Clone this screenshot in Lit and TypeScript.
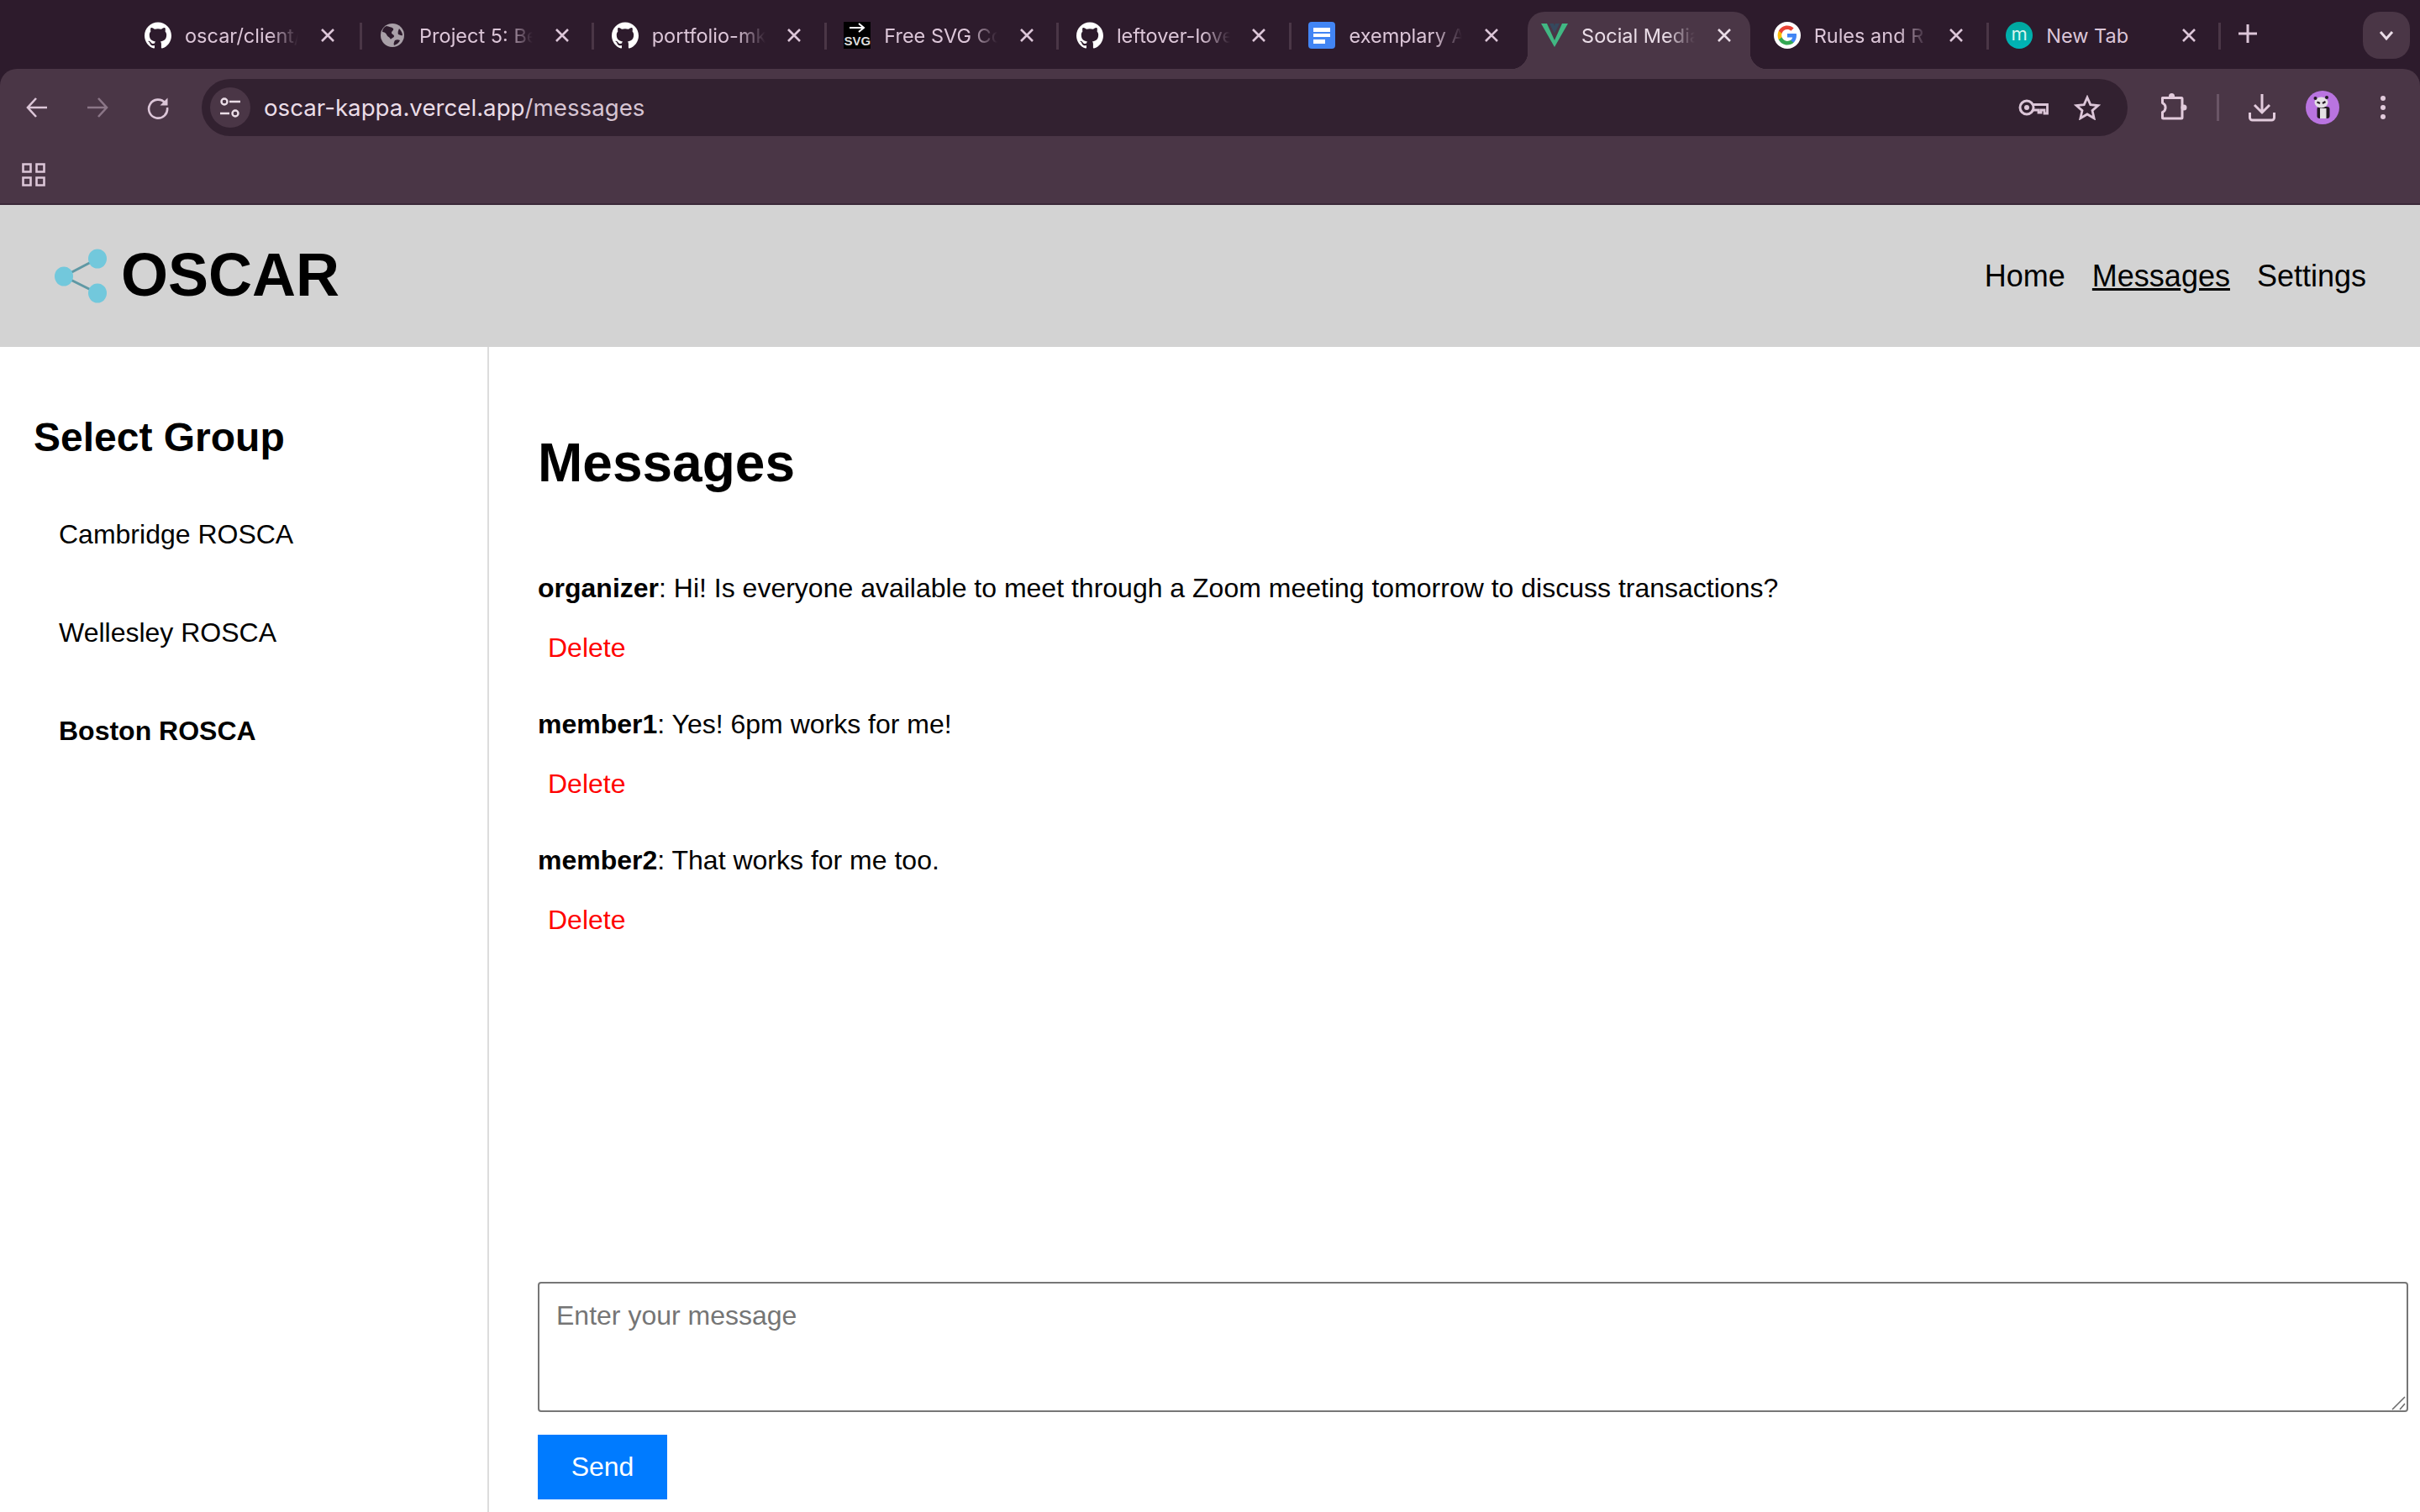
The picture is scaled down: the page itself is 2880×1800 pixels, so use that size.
import { LitElement, html, css, svg } from "lit";
import { customElement, state } from "lit/decorators.js";

const GITHUB = svg`<svg width="32" height="32" viewBox="0 0 24 24"><path fill="#fff" d="M12 .297c-6.63 0-12 5.373-12 12 0 5.303 3.438 9.8 8.205 11.385.6.113.82-.258.82-.577 0-.285-.01-1.04-.015-2.04-3.338.724-4.042-1.61-4.042-1.61C4.422 18.07 3.633 17.7 3.633 17.7c-1.087-.744.084-.729.084-.729 1.205.084 1.838 1.236 1.838 1.236 1.07 1.835 2.809 1.305 3.495.998.108-.776.417-1.305.76-1.605-2.665-.3-5.466-1.332-5.466-5.93 0-1.31.465-2.38 1.235-3.22-.135-.303-.54-1.523.105-3.176 0 0 1.005-.322 3.3 1.23.96-.267 1.98-.399 3-.405 1.02.006 2.04.138 3 .405 2.28-1.552 3.285-1.23 3.285-1.23.645 1.653.24 2.873.12 3.176.765.84 1.23 1.91 1.23 3.22 0 4.61-2.805 5.625-5.475 5.92.42.36.81 1.096.81 2.22 0 1.606-.015 2.896-.015 3.286 0 .315.21.69.825.57C20.565 22.092 24 17.592 24 12.297c0-6.627-5.373-12-12-12"/></svg>`;

const GLOBE = svg`<svg width="32" height="32" viewBox="0 0 32 32"><circle cx="16" cy="16" r="14" fill="#a9a0a8"/><path fill="#2d1b2c" d="M9 5c3 1 6 1 8 3 1 2-2 3-2 5s3 2 3 4-3 2-4 4c-1-3-4-3-5-6-1-2-3-3-5-3 0-3 2-6 5-7zM24 8c2 2 4 5 4 8-2 1-3-1-5-1-1-2 0-5 1-7zM19 22c2-1 4-1 6 0-1 3-4 5-7 6-1-2 0-4 1-6z"/></svg>`;

const SVG_ICON = html`<span class="svg-fav"
  ><svg width="26" height="12" viewBox="0 0 26 12">
    <path d="M4 6h17M15 1l6 5-6 5" fill="none" stroke="#fff" stroke-width="2" /></svg
  ><span class="svg-word">SVG</span></span
>`;

const DOCS = svg`<svg width="32" height="32" viewBox="0 0 32 32"><rect width="32" height="32" rx="4" fill="#4285f4"/><path fill="#fff" d="M6 7h20v5H6zM6 14h20v4H6zM6 21h14v5H6z"/></svg>`;

const VUE = svg`<svg width="32" height="32" viewBox="0 0 32 32"><path fill="#41b883" d="M0 2h7l9 20 9-20h7L16 30z"/><path fill="#35495e" d="M10 2h5l1 3 1-3h5l-6 12z"/></svg>`;

const GOOGLE = svg`<svg width="32" height="32" viewBox="0 0 32 32"><circle cx="16" cy="16" r="16" fill="#fff"/><path fill="#4285f4" d="M27 16.3c0-.8-.1-1.6-.2-2.3H16v4.400h6.200c-.3 1.400-1.100 2.600-2.300 3.400v2.900h3.700c2.100-2 3.400-4.900 3.400-8.400z"/><path fill="#34a853" d="M16 27.500c3.100 0 5.700-1 7.600-2.800l-3.700-2.900c-1 .7-2.400 1.100-3.900 1.100-3 0-5.500-2-6.400-4.700H5.800v3c1.900 3.800 5.800 6.300 10.200 6.300z"/><path fill="#fbbc05" d="M9.600 18.200c-.5-1.400-.5-3 0-4.400v-3H5.800c-1.600 3.200-1.600 7.200 0 10.400z"/><path fill="#ea4335" d="M16 9.100c1.700 0 3.200.6 4.400 1.700l3.300-3.300C21.700 5.600 19 4.500 16 4.500c-4.400 0-8.300 2.500-10.200 6.300l3.800 3c.9-2.700 3.400-4.700 6.400-4.700z"/></svg>`;

const MONICA = html`<span class="m-fav">m</span>`;

const CLOSE = svg`<svg class="close" width="18" height="18" viewBox="0 0 18 18"><path d="M2 2l14 14M16 2L2 16" fill="none" stroke="currentColor" stroke-width="2.600"/></svg>`;

interface Tab {
  title: string;
  icon: unknown;
  active?: boolean;
  noSep?: boolean;
}

const TABS: Tab[] = [
  { title: "oscar/client/", icon: GITHUB },
  { title: "Project 5: Be", icon: GLOBE },
  { title: "portfolio-mk", icon: GITHUB },
  { title: "Free SVG Co", icon: SVG_ICON },
  { title: "leftover-love", icon: GITHUB },
  { title: "exemplary A", icon: DOCS, noSep: true },
  { title: "Social Media", icon: VUE, active: true, noSep: true },
  { title: "Rules and R", icon: GOOGLE },
  { title: "New Tab", icon: MONICA },
];

const MESSAGES = [
  {
    sender: "organizer",
    text: "Hi! Is everyone available to meet through a Zoom meeting tomorrow to discuss transactions?",
  },
  { sender: "member1", text: "Yes! 6pm works for me!" },
  { sender: "member2", text: "That works for me too." },
];

const GROUPS = ["Cambridge ROSCA", "Wellesley ROSCA", "Boston ROSCA"];

@customElement("browser-chrome")
export class BrowserChrome extends LitElement {
  static styles = css`
    :host {
      display: block;
      height: 244px;
      background: #2d1b2c;
      font-family: Inter, "Liberation Sans", sans-serif;
      color: #dcc6d8;
    }
    .strip {
      display: flex;
      height: 82px;
      padding-left: 156px;
      box-sizing: border-box;
    }
    .tab {
      position: relative;
      display: flex;
      align-items: center;
      width: 264.600px;
      height: 68px;
      margin-top: 14px;
      padding: 0 22px 12px 16px;
      box-sizing: border-box;
      border-radius: 20px 20px 0 0;
      font-size: 23.500px;
    }
    .tab:first-child {
      margin-right: 2.500px;
    }
    .tab.active {
      background: #4a3646;
      color: #eadde7;
    }
    .tab.active::before,
    .tab.active::after {
      content: "";
      position: absolute;
      bottom: 0;
      width: 20px;
      height: 20px;
    }
    .tab.active::before {
      left: -20px;
      background: radial-gradient(circle at 0 0, transparent 20px, #4a3646 20.5px);
    }
    .tab.active::after {
      right: -20px;
      background: radial-gradient(circle at 100% 0, transparent 20px, #4a3646 20.5px);
    }
    .fav {
      display: flex;
      flex: none;
      width: 32px;
      height: 32px;
    }
    .title {
      flex: none;
      width: 135px;
      margin-left: 16px;
      overflow: hidden;
      white-space: nowrap;
      -webkit-mask-image: linear-gradient(90deg, #000 75%, transparent 100%);
      mask-image: linear-gradient(90deg, #000 75%, transparent 100%);
    }
    .title.plain {
      -webkit-mask-image: none;
      mask-image: none;
    }
    .close {
      flex: none;
      margin-left: auto;
    }
    .sep {
      display: flex;
      justify-content: center;
      flex: none;
      width: 12px;
      padding-top: 27px;
    }
    .sep i {
      width: 3px;
      height: 32px;
      background: #4a3646;
    }
    .plus {
      margin: 25px 0 0 12px;
      flex: none;
    }
    .more {
      display: flex;
      align-items: center;
      justify-content: center;
      width: 56px;
      height: 56px;
      margin: 14px 12px 0 auto;
      border-radius: 20px;
      background: #4a3646;
    }
    .svg-fav {
      display: flex;
      flex-direction: column;
      align-items: center;
      width: 32px;
      height: 32px;
      padding-top: 1px;
      box-sizing: border-box;
      background: #000;
    }
    .svg-word {
      font: bold 15px/14px "Liberation Sans", sans-serif;
      color: #ddd;
      margin-top: 3px;
    }
    .m-fav {
      display: flex;
      align-items: center;
      justify-content: center;
      width: 32px;
      height: 32px;
      padding-bottom: 4px;
      box-sizing: border-box;
      border-radius: 50%;
      background: linear-gradient(#00a79d, #00b5b8);
      color: #d8f5ef;
      font-size: 22px;
    }
    .toolbar {
      display: flex;
      align-items: center;
      height: 92px;
      padding-left: 8px;
      background: #4a3646;
      border-radius: 20px 20px 0 0;
    }
    .btn {
      display: flex;
      align-items: center;
      justify-content: center;
      flex: none;
      width: 72px;
    }
    .omnibox {
      display: flex;
      align-items: center;
      flex: none;
      width: 2292px;
      height: 68px;
      margin-left: 16px;
      margin-right: 18px;
      padding: 0 32px 0 10px;
      box-sizing: border-box;
      border-radius: 34px;
      background: #322130;
    }
    .chip {
      display: flex;
      align-items: center;
      justify-content: center;
      width: 48px;
      height: 48px;
      border-radius: 50%;
      background: #4a3646;
    }
    .url {
      margin-left: 16px;
      font-size: 27.700px;
      color: #eadde7;
    }
    .url span {
      color: #d6c4d2;
    }
    .omni-right {
      display: flex;
      align-items: center;
      gap: 30px;
      margin-left: auto;
    }
    .vsep {
      flex: none;
      width: 34px;
      display: flex;
      justify-content: center;
    }
    .vsep i {
      width: 3px;
      height: 32px;
      background: #6a5566;
    }
    .bookmarks {
      display: flex;
      align-items: center;
      height: 68px;
      padding-left: 26px;
      box-sizing: content-box;
      background: #4a3646;
      border-bottom: 2px solid #3a2838;
    }
  `;

  private renderTabs() {
    return TABS.map(
      (t) => html`
        <div class="tab ${t.active ? "active" : ""}">
          <span class="fav">${t.icon}</span>
          <span class="title ${t.title === "New Tab" ? "plain" : ""}">${t.title}</span>
          ${CLOSE}
        </div>
        <div class="sep">${t.noSep ? "" : html`<i></i>`}</div>
      `
    );
  }

  render() {
    return html`
      <div class="strip">
        ${this.renderTabs()}
        <svg class="plus" width="30" height="30" viewBox="0 0 30 30">
          <path d="M15 4v22M4 15h22" stroke="#dcc6d8" stroke-width="3" fill="none" />
        </svg>
        <div class="more">
          <svg width="20" height="14" viewBox="0 0 20 14">
            <path d="M3 3l7 8 7-8" fill="none" stroke="#eadde7" stroke-width="3" />
          </svg>
        </div>
      </div>
      <div class="toolbar">
        <span class="btn">
          <svg width="26" height="26" viewBox="0 0 26 26">
            <path d="M25 13H3M12 2L2 13l10 11" fill="none" stroke="#dcc6d8" stroke-width="2.600" />
          </svg>
        </span>
        <span class="btn">
          <svg width="26" height="26" viewBox="0 0 26 26">
            <path d="M1 13h22M14 2l10 11-10 11" fill="none" stroke="#8b7687" stroke-width="2.600" />
          </svg>
        </span>
        <span class="btn">
          <svg width="28" height="28" viewBox="0 0 28 28">
            <path d="M22.500 8.500A11 11 0 1 0 25 14" fill="none" stroke="#dcc6d8" stroke-width="2.600" />
            <path d="M25.500 2.500v9h-9z" fill="#dcc6d8" />
          </svg>
        </span>
        <div class="omnibox">
          <span class="chip">
            <svg width="28" height="28" viewBox="0 0 28 28">
              <circle cx="7" cy="7" r="3.500" fill="none" stroke="#eadde7" stroke-width="2.400" />
              <path d="M13 7h13M2 21h11" stroke="#eadde7" stroke-width="2.400" />
              <circle cx="20" cy="21" r="3.500" fill="none" stroke="#eadde7" stroke-width="2.400" />
            </svg>
          </span>
          <span class="url">oscar-kappa.vercel.app<span>/messages</span></span>
          <span class="omni-right">
            <svg width="36" height="22" viewBox="0 0 36 22">
              <circle cx="10" cy="11" r="8" fill="none" stroke="#dcc6d8" stroke-width="3" />
              <circle cx="10" cy="11" r="3" fill="#dcc6d8" />
              <path d="M18 7.500h16.500v10.500h-3.500v-4h-4v3h-3v-3h-6" fill="none" stroke="#dcc6d8" stroke-width="2.800" />
            </svg>
            <svg width="32" height="30" viewBox="0 0 32 30">
              <path d="M16 3l3.800 8.600 9.200.9-7 6.100 2.100 9.200L16 23l-8.100 4.800L10 18.600l-7-6.100 9.200-.9z" fill="none" stroke="#dcc6d8" stroke-width="2.800" />
            </svg>
          </span>
        </div>
        <span class="btn">
          <svg width="34" height="34" viewBox="0 0 34 34">
            <path d="M4.500 5.500H27a1 1 0 0 1 1 1V29a1 1 0 0 1-1 1H5.500a1 1 0 0 1-1-1V22.500a6 6 0 0 0 0-11V6.500a1 1 0 0 1 0-1z" fill="none" stroke="#e2cbdc" stroke-width="3" stroke-linejoin="round" />
            <circle cx="15.500" cy="3.500" r="3.500" fill="#e2cbdc" />
            <circle cx="30" cy="17" r="3.500" fill="#e2cbdc" />
          </svg>
        </span>
        <span class="vsep"><i></i></span>
        <span class="btn">
          <svg width="34" height="34" viewBox="0 0 34 34">
            <path d="M17 1v22M8 14l9 9 9-9" fill="none" stroke="#e2cbdc" stroke-width="3" />
            <path d="M2.500 23v6a3 3 0 0 0 3 3h23a3 3 0 0 0 3-3v-6" fill="none" stroke="#e2cbdc" stroke-width="3" />
          </svg>
        </span>
        <span class="btn">
          <svg width="40" height="40" viewBox="0 0 40 40">
            <circle cx="20" cy="20" r="20" fill="#b974e0" />
            <rect x="13.500" y="19" width="15" height="14" rx="3" fill="#231a22" />
            <rect x="17" y="21" width="7.500" height="12" fill="#e4e0e4" />
            <ellipse cx="18.500" cy="14" rx="8" ry="6.500" fill="#e4e0e4" />
            <circle cx="11.500" cy="9" r="2" fill="#231a22" />
            <circle cx="25" cy="8" r="2" fill="#231a22" />
            <path d="M13.500 13.500l3.500 1.500M20 15l3.500-2" stroke="#231a22" stroke-width="2.200" />
          </svg>
        </span>
        <span class="btn">
          <svg width="8" height="30" viewBox="0 0 8 30">
            <circle cx="4" cy="4" r="3" fill="#e2cbdc" />
            <circle cx="4" cy="15" r="3" fill="#e2cbdc" />
            <circle cx="4" cy="26" r="3" fill="#e2cbdc" />
          </svg>
        </span>
      </div>
      <div class="bookmarks">
        <svg width="28" height="28" viewBox="0 0 28 28">
          <path d="M1.500 1.500h9v9h-9zM17.500 1.500h9v9h-9zM1.500 17.500h9v9h-9zM17.500 17.500h9v9h-9z" fill="none" stroke="#dcc6d8" stroke-width="2.600" />
        </svg>
      </div>
    `;
  }
}

@customElement("app-root")
export class AppRoot extends LitElement {
  static styles = css`
    :host {
      display: block;
      width: 2880px;
      height: 1800px;
      overflow: hidden;
      background: #fff;
      color: #000;
      font-family: "Liberation Sans", Arial, sans-serif;
      font-size: 32px;
    }
    .header {
      display: flex;
      align-items: center;
      justify-content: space-between;
      height: 169px;
      padding: 0 64px;
      box-sizing: border-box;
      background: #d3d3d3;
    }
    .brand {
      display: flex;
      align-items: center;
      gap: 16px;
    }
    .brand-name {
      font-size: 72px;
      font-weight: bold;
      margin-bottom: 4px;
    }
    .nav {
      display: flex;
      gap: 32px;
      font-size: 36px;
    }
    .nav .current {
      text-decoration: underline;
    }
    .body {
      display: flex;
      height: 1387px;
    }
    .sidebar {
      flex: none;
      width: 582px;
      box-sizing: border-box;
      padding: 80px 0 0 40px;
      border-right: 2px solid #dcdcdc;
    }
    .sidebar h2 {
      margin: 0 0 70px;
      font-size: 48px;
      font-weight: bold;
    }
    .group {
      margin: 0 0 80px 30px;
    }
    .group.selected {
      font-weight: bold;
    }
    .main {
      display: flex;
      flex-direction: column;
      flex: 1;
      padding: 101px 14px 15px 58px;
      box-sizing: border-box;
    }
    .main h1 {
      margin: 0 0 94px;
      font-size: 64px;
      font-weight: bold;
    }
    .msg-text {
      margin: 0 0 34px;
    }
    .message {
      margin-bottom: 54px;
    }
    .delete {
      display: block;
      padding: 0 12px;
      border: none;
      background: none;
      color: #f00;
      font: inherit;
    }
    .compose {
      position: relative;
      margin-top: auto;
      height: 155px;
    }
    textarea {
      display: block;
      width: 100%;
      height: 100%;
      padding: 20px;
      box-sizing: border-box;
      border: 2px solid #767676;
      border-radius: 4px;
      font: inherit;
      outline: none;
      resize: none;
    }
    textarea::placeholder {
      color: #757575;
    }
    .grip {
      position: absolute;
      right: 3px;
      bottom: 2px;
      pointer-events: none;
    }
    .send {
      align-self: flex-start;
      width: 154px;
      height: 77px;
      margin-top: 27px;
      border: none;
      background: #007bff;
      color: #fff;
      font: inherit;
    }
  `;

  @state()
  private selectedGroup = "Boston ROSCA";

  render() {
    return html`
      <browser-chrome></browser-chrome>
      <div class="header">
        <div class="brand">
          <svg width="64" height="68" viewBox="0 0 64 68">
            <path d="M52 13L12 34l40 20" fill="none" stroke="#5f98a4" stroke-width="3" />
            <ellipse cx="12" cy="34" rx="11" ry="11.500" fill="#72c8dc" />
            <ellipse cx="52" cy="13" rx="11" ry="11.500" fill="#72c8dc" />
            <ellipse cx="52" cy="54" rx="11" ry="11.500" fill="#72c8dc" />
          </svg>
          <span class="brand-name">OSCAR</span>
        </div>
        <nav class="nav">
          <span>Home</span>
          <span class="current">Messages</span>
          <span>Settings</span>
        </nav>
      </div>
      <div class="body">
        <aside class="sidebar">
          <h2>Select Group</h2>
          ${GROUPS.map(
            (g) => html`<div class="group ${g === this.selectedGroup ? "selected" : ""}">${g}</div>`
          )}
        </aside>
        <section class="main">
          <h1>Messages</h1>
          ${MESSAGES.map(
            (m) => html`
              <div class="message">
                <p class="msg-text"><strong>${m.sender}</strong>: ${m.text}</p>
                <button class="delete">Delete</button>
              </div>
            `
          )}
          <div class="compose">
            <textarea placeholder="Enter your message"></textarea>
            <svg class="grip" width="17" height="17" viewBox="0 0 17 17">
              <path d="M1 16L16 1M10 16l6-7" fill="none" stroke="#6e6e6e" stroke-width="1.600" />
            </svg>
          </div>
          <button class="send">Send</button>
        </section>
      </div>
    `;
  }
}
